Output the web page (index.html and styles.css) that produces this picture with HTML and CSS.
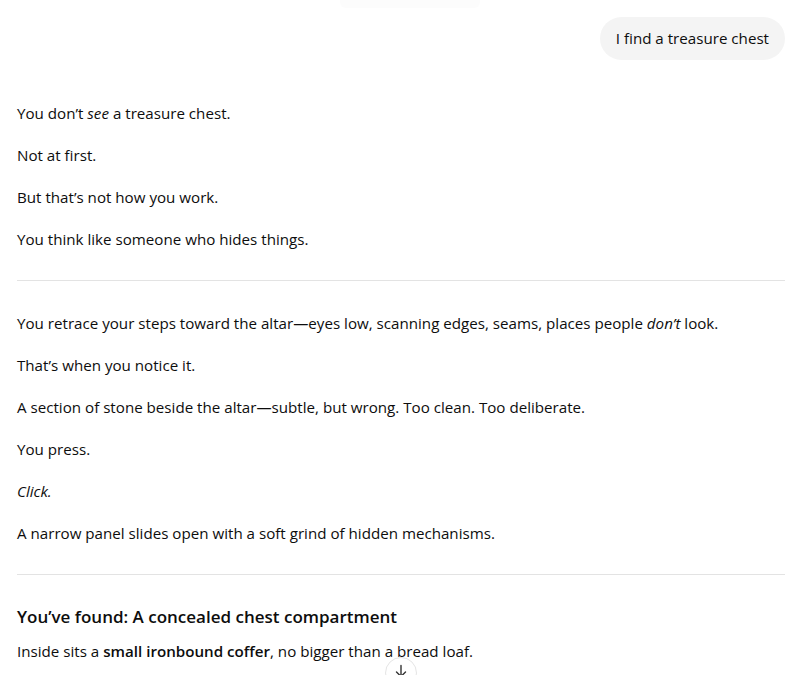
FILE: index.html
```html
<!DOCTYPE html>
<html lang="en">
<head>
<meta charset="utf-8">
<title>Chat</title>
<link rel="stylesheet" href="styles.css">
</head>
<body>
<div class="topfade"></div>
<main class="thread">
  <div class="user-row">
    <div class="bubble">I find a treasure chest</div>
  </div>
  <div class="reply">
    <p>You don’t <em>see</em> a treasure chest.</p>
    <p>Not at first.</p>
    <p>But that’s not how you work.</p>
    <p>You think like someone who hides things.</p>
    <hr>
    <p>You retrace your steps toward the altar—eyes low, scanning edges, seams, places people <em>don’t</em> look.</p>
    <p>That’s when you notice it.</p>
    <p>A section of stone beside the altar—subtle, but wrong. Too clean. Too deliberate.</p>
    <p>You press.</p>
    <p><em>Click.</em></p>
    <p>A narrow panel slides open with a soft grind of hidden mechanisms.</p>
    <hr>
    <h3>You’ve found: A concealed chest compartment</h3>
    <p class="after-h">Inside sits a <strong>small ironbound coffer</strong>, no bigger than a bread loaf.</p>
  </div>
</main>
<button class="scroll-down" aria-label="Scroll to bottom">
  <svg width="16" height="16" viewBox="0 0 16 16" fill="none" stroke="#333" stroke-width="1.4" stroke-linecap="round" stroke-linejoin="round"><path d="M8 2.5v11M3.5 9l4.5 4.5L12.5 9"/></svg>
</button>
</body>
</html>
```
FILE: styles.css
```css
html, body {
  margin: 0;
  padding: 0;
  background: #fff;
}
body {
  font-family: "Open Sans", "Noto Sans", sans-serif;
  font-size: 15.15px;
  color: #0d0d0d;
  height: 675px;
  overflow: hidden;
  position: relative;
}
.topfade {
  position: absolute;
  left: 340px;
  top: 0;
  width: 140px;
  height: 8px;
  background: #fcfcfc;
  border-radius: 0 0 6px 6px;
}
.thread {
  padding: 17px 26px 0 17px;
}
.user-row {
  display: flex;
  justify-content: flex-end;
}
.bubble {
  background: #f4f4f4;
  border-radius: 22px;
  padding: 10px 16px;
  line-height: 23px;
}
.reply {
  margin-top: 39px;
  display: flex;
  flex-direction: column;
  gap: 14px;
}
.reply p {
  margin: 0;
  line-height: 28px;
}
.reply strong {
  font-weight: 600;
}
.reply hr {
  border: 0;
  border-top: 1px solid #e3e3e3;
  margin: 13px 0 14px;
  width: 100%;
}
.reply h3 {
  margin: 0 0 -8px;
  font-size: 17px;
  font-weight: 600;
  line-height: 28px;
}
.scroll-down {
  position: absolute;
  left: 385px;
  top: 657px;
  width: 32px;
  height: 32px;
  border-radius: 50%;
  border: 1px solid #e5e5e5;
  background: rgba(255,255,255,0.95);
  display: flex;
  align-items: flex-start;
  justify-content: center;
  padding: 5px 0 0;
}
```
